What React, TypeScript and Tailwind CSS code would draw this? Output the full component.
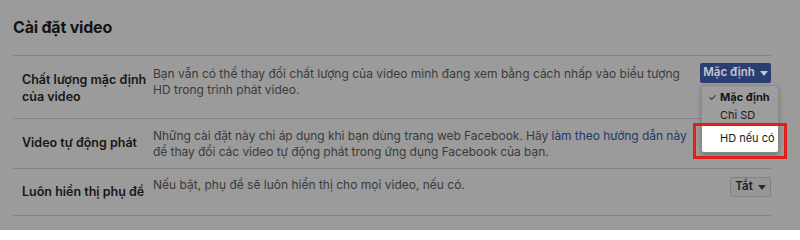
import React from "react";

function Caret({ className }: { className: string }) {
  return (
    <svg width="8" height="5" viewBox="0 0 8 5" className={className}>
      <path d="M0 0 L8 0 L4 5 Z" fill="currentColor" />
    </svg>
  );
}

export default function App() {
  return (
    <div className="relative h-[230px] w-[800px] overflow-hidden bg-[#9b9b9b] font-['Inter',sans-serif] text-[#161616]">
      <div className="pl-[13px] pr-[29px]">
        <div className="flex h-[56px] items-center border-b border-[#828282] pb-[2px]">
          <h1 className="text-[16px] font-bold tracking-[-0.2px] text-[#141414]">Cài đặt video</h1>
        </div>

        {/* Row 1 */}
        <div className="flex h-[63px] border-b border-[#828282]">
          <div className="flex w-[140px] shrink-0 items-center whitespace-nowrap pl-[9px] pt-[1px] text-[12.5px] font-semibold leading-[17px]">
            <span>
              Chất lượng mặc định
              <br />
              của video
            </span>
          </div>
          <div className="flex-1 whitespace-nowrap pt-[10px] text-[12px] leading-[16px] text-[#3a3a3a]">
            Bạn vẫn có thể thay đổi chất lượng của video mình đang xem bằng cách nhấp vào biểu tượng
            <br />
            HD trong trình phát video.
          </div>
          <div className="flex w-[80px] shrink-0 justify-end pt-[7px]">
            <div className="flex h-[20px] w-[71px] items-center justify-center gap-[5px] whitespace-nowrap rounded-[2px] bg-[#2b3e72] text-[11.5px] font-semibold text-[#c3c7d1]">
              Mặc định
              <Caret className="text-[#c3c7d1]" />
            </div>
          </div>
        </div>

        {/* Row 2 */}
        <div className="flex h-[50px] border-b border-[#828282]">
          <div className="flex w-[140px] shrink-0 items-center whitespace-nowrap pl-[9px] text-[12.5px] font-semibold">
            Video tự động phát
          </div>
          <div className="flex-1 whitespace-nowrap pt-[9px] text-[12px] leading-[16px] tracking-[-0.05px] text-[#3a3a3a]">
            Những cài đặt này chỉ áp dụng khi bạn dùng trang web Facebook. Hãy{" "}
            <span className="text-[#22386a]">làm theo hướng dẫn này</span>
            <br />
            để thay đổi các video tự động phát trong ứng dụng Facebook của bạn.
          </div>
          <div className="w-[80px] shrink-0" />
        </div>

        {/* Row 3 */}
        <div className="flex h-[47px] border-b border-[#828282]">
          <div className="flex w-[140px] shrink-0 items-center whitespace-nowrap pl-[9px] text-[12.5px] font-semibold">
            Luôn hiển thị phụ đề
          </div>
          <div className="flex-1 whitespace-nowrap pt-[8px] text-[12px] leading-[16px] text-[#3a3a3a]">
            Nếu bật, phụ đề sẽ luôn hiển thị cho mọi video, nếu có.
          </div>
          <div className="flex w-[80px] shrink-0 justify-end pt-[8px]">
            <div className="flex h-[20px] w-[41px] items-center justify-center gap-[5px] whitespace-nowrap rounded-[2px] border border-[#828282] bg-[#969696] text-[11.5px] font-semibold text-[#1c1c1c]">
              Tắt
              <Caret className="text-[#2a2a2a]" />
            </div>
          </div>
        </div>
      </div>

      {/* Dropdown menu */}
      <div className="absolute left-[701px] top-[85px] w-[78px] whitespace-nowrap rounded-[2px] border border-[#8a8a8a] bg-[#9d9d9d] shadow-[0_2px_4px_rgba(0,0,0,0.25)]">
        <div className="mt-[2px] flex h-[19px] items-center text-[11px]">
          <span className="w-[18px] pl-[6px] text-[10px] text-[#1a1a1a]">✓</span>
          <span className="font-bold text-[#151515]">Mặc định</span>
        </div>
        <div className="flex h-[17px] items-center pl-[18px] text-[11px] text-[#1a1a1a]">Chỉ SD</div>
        <div className="flex h-[28px] items-center rounded-b-[2px] bg-white pl-[18px] text-[11px] text-[#1a1a1a]">
          HD nếu có
        </div>
      </div>

      {/* Red highlight box */}
      <div className="absolute left-[693px] top-[123px] h-[36px] w-[94px] border-[3px] border-[#e0201c]" />
    </div>
  );
}
